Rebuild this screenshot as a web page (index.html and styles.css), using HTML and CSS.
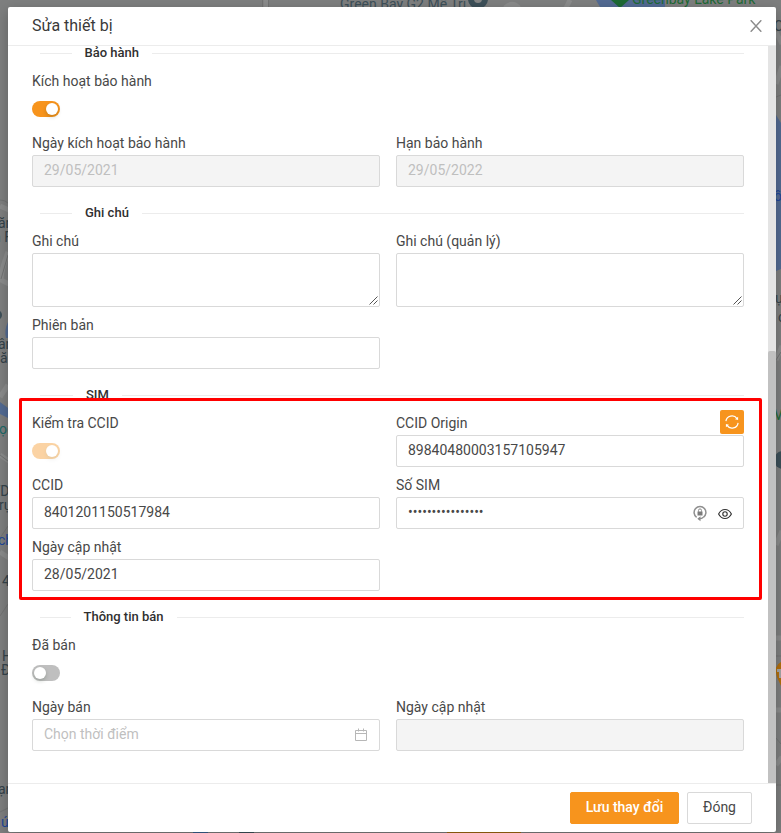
FILE: index.html
```html
<!DOCTYPE html>
<html lang="vi">
<head>
<meta charset="utf-8">
<title>Sửa thiết bị</title>
<link rel="stylesheet" href="styles.css">
</head>
<body>
<svg class="map" width="781" height="833" viewBox="0 0 781 833" aria-hidden="true">
  <rect width="781" height="833" fill="#7e7f7f"/>
  <g fill="#536b93">
    <path d="M596 0H665V7H600z"/><path d="M776 115l5 8v146l-5 2z"/>
    <path d="M8 322q-4 8-2 16h2zM0 402l8 6v10L0 414z"/>
  </g>
  <g fill="none" stroke="#8b8c8c" stroke-width="5">
    <path d="M266 0V8M570 0l-4 8M505 8q7-7 14 0M776 32l6 12M776 84l6-18M776 360l6-14M0 206l9 4M8 252q-7 18-7 28l8 4M0 455l9 6M0 552l9 6M8 385l-8 12M776 638h6M776 710h6M776 765l6-8M776 545l6-14"/>
  </g>
  <g fill="none" stroke="#727373">
    <path d="M262.500 0V8M268.500 0V8M0 200q5 0 8 3M8 255L1 279M0 455l8 6M8 526l-8 12M0 616l8-12M0 812l8-4M776 97l5-2M776 360l5-8M776 656h5M776 738l5 6M776 785h5"/>
  </g>
  <circle cx="478" cy="-1" r="10" fill="#3d5059"/><circle cx="478" cy="-1" r="4" fill="#858686"/>
  <path d="M611 0h18l-9 8z" fill="#1d6a35"/>
  <circle cx="-3" cy="315" r="5" fill="#3d5059"/>
  <circle cx="783" cy="460" r="9" fill="#3d5059"/>
  <path d="M781 662q-8 4-4 15l4 9z" fill="#b4700c"/><path d="M777 669h4v9h-2v-6h-2z" fill="#a7a7a7"/>
  <g class="map-label">
    <text x="340" y="9" fill="#3d5059">Green Bay G2 Mễ Trì</text>
    <text x="632" y="4" fill="#1d6a35">Greenbay Lake Park</text>
    <text x="-2" y="228">ăn</text><text x="-7" y="242">n F</text>
    <text x="-2" y="349">ân</text><text x="0" y="363">ă</text>
    <text x="-1" y="434" fill="#1c6a68">ọc</text>
    <text x="-8" y="496">TD</text><text x="-1" y="510">rụ</text>
    <text x="-2" y="545" fill="#1e4699">ch</text>
    <text x="2" y="586">4</text>
    <text x="2" y="661">H</text><text x="1" y="675">Đ</text>
    <text x="-2" y="794">ạn</text>
    <text x="1" y="827" fill="#1e4699">ú</text>
    <text x="774" y="31">Ca</text><text x="774" y="201" fill="#1e4699">ồ</text>
    <text x="775" y="303">ự</text><text x="778" y="322">ć</text>
    <text x="774" y="420" fill="#1d6a35">V</text>
  </g>
  <path d="M193 832h15v1h-15z" fill="#38618f"/><path d="M239 832h15v1h-15z" fill="#3d5059"/><path d="M447 832h74v1h-74z" fill="#a0690f"/>
</svg>

<div class="modal" role="dialog">
  <header class="modal-header">
    <h1 class="modal-title">Sửa thiết bị</h1>
    <svg class="close" viewBox="0 0 12 12" width="12" height="12"><path d="M.7.2L11.300 11.800M11.300.2L.7 11.800" fill="none" stroke="#8c8c8c" stroke-width="1.400"/></svg>
  </header>

  <div class="modal-body">
    <main class="form">
      <h2 class="divider divider-first"><span>Bảo hành</span></h2>
      <div class="grid">
        <div class="field"><span class="label">Kích hoạt bảo hành</span><div class="control"><i class="switch on"></i></div></div>
        <div></div>
        <div class="field"><span class="label">Ngày kích hoạt bảo hành</span><div class="input disabled">29/05/2021</div></div>
        <div class="field"><span class="label">Hạn bảo hành</span><div class="input disabled">29/05/2022</div></div>
      </div>

      <h2 class="divider"><span>Ghi chú</span></h2>
      <div class="grid">
        <div class="field"><span class="label">Ghi chú</span><div class="input area"><svg width="9" height="9" viewBox="0 0 9 9"><path d="M.5 8.500l8-8M4.500 8.500l4-4" stroke="#555" fill="none"/></svg></div></div>
        <div class="field"><span class="label">Ghi chú (quản lý)</span><div class="input area"><svg width="9" height="9" viewBox="0 0 9 9"><path d="M.5 8.500l8-8M4.500 8.500l4-4" stroke="#555" fill="none"/></svg></div></div>
        <div class="field"><span class="label">Phiên bản</span><div class="input"></div></div>
      </div>

      <h2 class="divider divider-sim"><span>SIM</span></h2>
      <div class="grid">
        <div class="field"><span class="label">Kiểm tra CCID</span><div class="control"><i class="switch on faded"></i></div></div>
        <div class="field">
          <div class="label label-row"><span>CCID Origin</span>
            <span class="sync"><svg viewBox="0 0 14 14" width="14" height="14" fill="none" stroke="#fff" stroke-width="1.200"><path d="M.9 6.200A6.100 6.100 0 0 1 12 3.600M13.100 7.800A6.100 6.100 0 0 1 2 10.400"/><path d="M13.100 1.700v3.400L10 4.300zM.9 12.300V8.900l3.100.8z" fill="#fff" stroke="none"/></svg></span>
          </div>
          <div class="input">89840480003157105947</div>
        </div>
        <div class="field"><span class="label">CCID</span><div class="input">8401201150517984</div></div>
        <div class="field"><span class="label">Số SIM</span>
          <div class="input">
            <span class="password">••••••••••••••••</span>
            <svg class="lock" viewBox="0 0 14 17" width="14" height="17"><path d="M3.600 12.300A5.900 5.900 0 1 1 10.400 12.300" fill="none" stroke="#8f8f8f" stroke-width="1.500"/><path d="M4.500 6.500h5v4h-5z" fill="#7b7b7b"/><path d="M5.500 6.800V5.400a1.500 1.500 0 0 1 3 0v1.400" fill="none" stroke="#8a8a8a"/><path d="M10.400 12.300Q9 13.700 6 13.700" fill="none" stroke="#8f8f8f" stroke-width="1.400"/><path d="M7.500 11.200v5L4.300 13.700z" fill="#8a8a8a"/></svg>
            <svg class="eye" viewBox="0 0 14 12" width="14" height="12" fill="none" stroke="#333" stroke-width="1.150"><path d="M.6 6Q2.900 1.500 7 1.500T13.400 6Q11.100 10.500 7 10.500T.6 6z"/><circle cx="7" cy="6" r="2.200"/></svg>
          </div>
        </div>
        <div class="field"><span class="label">Ngày cập nhật</span><div class="input">28/05/2021</div></div>
      </div>

      <h2 class="divider divider-sale"><span>Thông tin bán</span></h2>
      <div class="grid">
        <div class="field"><span class="label">Đã bán</span><div class="control"><i class="switch"></i></div></div>
        <div></div>
        <div class="field"><span class="label">Ngày bán</span>
          <div class="input placeholder">Chọn thời điểm
            <svg class="calendar" viewBox="0 0 14 14" width="14" height="14" fill="none" stroke="#b7b7b7"><path d="M1.500 2.500h11v10h-11zM1.500 5.500h11M4.500.500v3M9.500.500v3"/></svg>
          </div>
        </div>
        <div class="field"><span class="label">Ngày cập nhật</span><div class="input disabled"></div></div>
      </div>
    </main>
    <div class="scrollbar"><div class="thumb"></div></div>
  </div>

  <footer class="modal-footer">
    <button class="btn primary">Lưu thay đổi</button>
    <button class="btn">Đóng</button>
  </footer>
</div>
<div class="highlight"></div>
</body>
</html>
```
FILE: styles.css
```css
* { box-sizing: border-box; }
body {
  margin: 0;
  width: 781px;
  height: 833px;
  overflow: hidden;
  position: relative;
  padding: 7px 0 0 8px;
  font: 14px/22px Roboto, sans-serif;
  color: #484848;
}
.map { position: absolute; left: 0; top: 0; }
.map-label { font: 14px Roboto, sans-serif; fill: #35434a; }

.modal {
  position: relative;
  display: flex;
  flex-direction: column;
  width: 768px;
  height: 825px;
  background: #fff;
  border-radius: 2px;
  box-shadow: 0 4px 14px rgba(0, 0, 0, .25);
}
.modal-header {
  display: flex;
  align-items: center;
  justify-content: space-between;
  height: 39px;
  padding: 0 14px 0 24px;
  border-bottom: 1px solid #ececec;
}
.modal-title { margin: 0; font-size: 16px; line-height: 22px; font-weight: 400; color: #3a3a3a; }
.modal-body { display: flex; height: 737px; overflow: hidden; }
.form { width: 760px; padding: 0 24px; }
.scrollbar { width: 8px; background: #e4e4e4; }
.thumb { height: 432px; margin-top: 305px; background: #c1c1c1; border-radius: 2px 2px 0 0; }

.divider {
  display: flex;
  align-items: center;
  height: 21px;
  margin: 16px 0 6px 8px;
  font-size: 13px;
  line-height: 21px;
  font-weight: 500;
  color: #303030;
}
.divider::before, .divider::after { content: ""; height: 1px; background: #ececec; }
.divider::before { width: 32px; }
.divider::after { flex: 1; }
.divider span { padding: 0 13px; position: relative; top: -1px; }
.divider-first { margin-top: -3px; }
.divider-first::before { width: 31.5px; }
.divider-sim::before { width: 33px; }
.divider-sale::before { width: 30.5px; }

.grid { display: grid; grid-template-columns: 348px 348px; gap: 7px 16px; }
.label { display: block; height: 23px; line-height: 22px; }
.label-row { display: flex; justify-content: space-between; }
.sync {
  display: flex;
  align-items: center;
  justify-content: center;
  width: 24px;
  height: 24px;
  margin-top: -2px;
  background: #f7941d;
  border-radius: 2px;
}
.control { display: flex; align-items: center; height: 32px; }
.switch { display: block; width: 28px; height: 16px; padding: 2px; border-radius: 8px; background: #bfbfbf; }
.switch::before {
  content: "";
  display: block;
  width: 12px;
  height: 12px;
  border-radius: 50%;
  background: #fff;
  box-shadow: 0 2px 4px rgba(0, 35, 11, .2);
}
.on { background: #f7941d; }
.on::before { margin-left: 12px; }
.faded { opacity: .4; }

.input {
  display: flex;
  align-items: center;
  height: 32px;
  padding: 0 11px 2px;
  border: 1px solid #d9d9d9;
  border-radius: 2px;
  background: #fff;
}
.disabled { background: #f4f4f4; color: #bfbfbf; }
.placeholder { color: #bfbfbf; }
.area { height: 54px; align-items: flex-end; justify-content: flex-end; padding: 0 1px 1px; }
.password { flex: 1; font-size: 14px; }
.lock { margin: 2px 11px 0 0; }
.eye { margin-top: 3px; }
.calendar { margin: 2px 0 0 auto; }

.modal-footer {
  display: flex;
  justify-content: flex-end;
  gap: 8px;
  height: 49px;
  padding: 8px 24px 0;
  border-top: 1px solid #ececec;
}
.btn {
  width: 65px;
  height: 32px;
  padding: 0 0 2px;
  border: 1px solid #d9d9d9;
  border-radius: 2px;
  background: #fff;
  color: #484848;
  font: 14px/22px Roboto, sans-serif;
}
.primary { width: 109px; border-color: #f7941d; background: #f7941d; color: #fff; font-weight: 500; }

.highlight {
  position: absolute;
  left: 19px;
  top: 398px;
  width: 743px;
  height: 202px;
  border: 3px solid #f00;
  border-radius: 2px;
}
```
